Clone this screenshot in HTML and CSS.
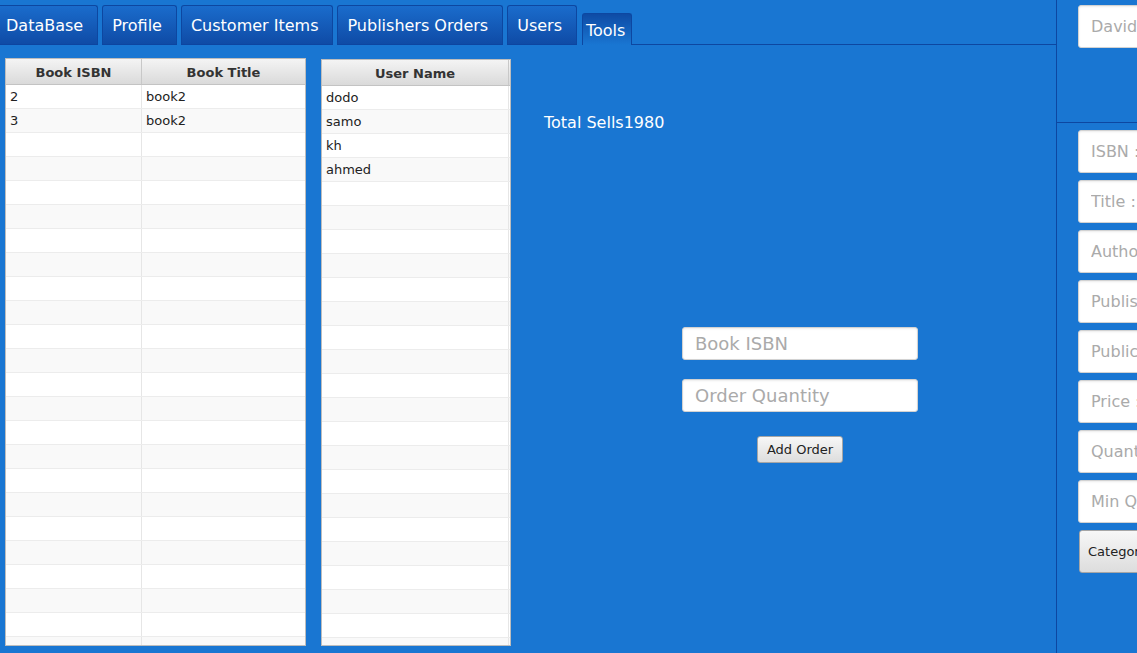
FILE: index.html
```html
<!DOCTYPE html>
<html>
<head>
<meta charset="utf-8">
<link rel="stylesheet" href="styles.css">
</head>
<body>
<div class="app">
  <div class="main">
    <div class="tabbar">
      <div class="tab first">DataBase</div>
      <div class="tab">Profile</div>
      <div class="tab">Customer Items</div>
      <div class="tab">Publishers Orders</div>
      <div class="tab">Users</div>
      <div class="tab selected">Tools</div>
      <div class="tabfill"></div>
    </div>
    <div class="content">
      <div class="grid t1">
        <div class="hdr"><div class="hc c1">Book ISBN</div><div class="hc c2">Book Title</div></div>
        <div class="gbody">
          <div class="row"><div class="cell c1">2</div><div class="cell c2">book2</div></div>
          <div class="row"><div class="cell c1">3</div><div class="cell c2">book2</div></div>
          <div class="row"><div class="cell c1"></div><div class="cell c2"></div></div>
          <div class="row"><div class="cell c1"></div><div class="cell c2"></div></div>
          <div class="row"><div class="cell c1"></div><div class="cell c2"></div></div>
          <div class="row"><div class="cell c1"></div><div class="cell c2"></div></div>
          <div class="row"><div class="cell c1"></div><div class="cell c2"></div></div>
          <div class="row"><div class="cell c1"></div><div class="cell c2"></div></div>
          <div class="row"><div class="cell c1"></div><div class="cell c2"></div></div>
          <div class="row"><div class="cell c1"></div><div class="cell c2"></div></div>
          <div class="row"><div class="cell c1"></div><div class="cell c2"></div></div>
          <div class="row"><div class="cell c1"></div><div class="cell c2"></div></div>
          <div class="row"><div class="cell c1"></div><div class="cell c2"></div></div>
          <div class="row"><div class="cell c1"></div><div class="cell c2"></div></div>
          <div class="row"><div class="cell c1"></div><div class="cell c2"></div></div>
          <div class="row"><div class="cell c1"></div><div class="cell c2"></div></div>
          <div class="row"><div class="cell c1"></div><div class="cell c2"></div></div>
          <div class="row"><div class="cell c1"></div><div class="cell c2"></div></div>
          <div class="row"><div class="cell c1"></div><div class="cell c2"></div></div>
          <div class="row"><div class="cell c1"></div><div class="cell c2"></div></div>
          <div class="row"><div class="cell c1"></div><div class="cell c2"></div></div>
          <div class="row"><div class="cell c1"></div><div class="cell c2"></div></div>
          <div class="row"><div class="cell c1"></div><div class="cell c2"></div></div>
          <div class="row"><div class="cell c1"></div><div class="cell c2"></div></div>
        </div>
      </div>
      <div class="grid t2">
        <div class="hdr"><div class="hc u1">User Name</div><div class="hc fill"></div></div>
        <div class="gbody">
          <div class="row"><div class="cell u1">dodo</div><div class="cell fill"></div></div>
          <div class="row"><div class="cell u1">samo</div><div class="cell fill"></div></div>
          <div class="row"><div class="cell u1">kh</div><div class="cell fill"></div></div>
          <div class="row"><div class="cell u1">ahmed</div><div class="cell fill"></div></div>
          <div class="row"><div class="cell u1"></div><div class="cell fill"></div></div>
          <div class="row"><div class="cell u1"></div><div class="cell fill"></div></div>
          <div class="row"><div class="cell u1"></div><div class="cell fill"></div></div>
          <div class="row"><div class="cell u1"></div><div class="cell fill"></div></div>
          <div class="row"><div class="cell u1"></div><div class="cell fill"></div></div>
          <div class="row"><div class="cell u1"></div><div class="cell fill"></div></div>
          <div class="row"><div class="cell u1"></div><div class="cell fill"></div></div>
          <div class="row"><div class="cell u1"></div><div class="cell fill"></div></div>
          <div class="row"><div class="cell u1"></div><div class="cell fill"></div></div>
          <div class="row"><div class="cell u1"></div><div class="cell fill"></div></div>
          <div class="row"><div class="cell u1"></div><div class="cell fill"></div></div>
          <div class="row"><div class="cell u1"></div><div class="cell fill"></div></div>
          <div class="row"><div class="cell u1"></div><div class="cell fill"></div></div>
          <div class="row"><div class="cell u1"></div><div class="cell fill"></div></div>
          <div class="row"><div class="cell u1"></div><div class="cell fill"></div></div>
          <div class="row"><div class="cell u1"></div><div class="cell fill"></div></div>
          <div class="row"><div class="cell u1"></div><div class="cell fill"></div></div>
          <div class="row"><div class="cell u1"></div><div class="cell fill"></div></div>
          <div class="row"><div class="cell u1"></div><div class="cell fill"></div></div>
          <div class="row"><div class="cell u1"></div><div class="cell fill"></div></div>
        </div>
      </div>
      <div class="middle">
        <div class="total">Total Sells1980</div>
        <div class="orderform">
          <input class="field big" placeholder="Book ISBN">
          <input class="field big" placeholder="Order Quantity">
          <button class="btn add">Add Order</button>
        </div>
      </div>
    </div>
  </div>
  <div class="side">
    <div class="side-top">
      <input class="field side-field" placeholder="David">
    </div>
    <div class="side-form">
      <input class="field side-field" placeholder="ISBN :">
      <input class="field side-field" placeholder="Title :">
      <input class="field side-field" placeholder="Author :">
      <input class="field side-field" placeholder="Publisher :">
      <input class="field side-field" placeholder="Publication Year :">
      <input class="field side-field" placeholder="Price :">
      <input class="field side-field" placeholder="Quantity :">
      <input class="field side-field" placeholder="Min Quantity :">
      <button class="btn category">Category</button>
    </div>
  </div>
</div>
</body>
</html>
```
FILE: styles.css
```css
* { box-sizing: border-box; }
html, body { margin: 0; padding: 0; }
body {
  background: #1976d2;
  font-family: "DejaVu Sans", "Liberation Sans", sans-serif;
  overflow: hidden;
}
.app {
  display: flex;
  width: 1137px;
  height: 653px;
  overflow: hidden;
}
.main {
  width: 1056px;
  flex-shrink: 0;
  display: flex;
  flex-direction: column;
}

/* tabs */
.tabbar {
  height: 45px;
  display: flex;
  align-items: flex-end;
  gap: 4px;
}
.tab {
  height: 40px;
  display: flex;
  align-items: center;
  padding: 0 14px 0 9px;
  font-size: 16px;
  color: #ffffff;
  white-space: nowrap;
  background: linear-gradient(#1a6ccc, #0f4ba6);
  border: 1px solid #0d47a1;
  border-bottom: 1px solid #0d45a0;
  border-radius: 3px 3px 0 0;
}
.tab.first { margin-left: -4px; }
.tab.selected {
  height: 32px;
  margin-left: 1px;
  padding: 1px 6px 0 3px;
  background: linear-gradient(#0e4ba5, #1976d2);
  border: 1px solid #0d47a1;
  border-bottom: none;
}
.tabfill {
  flex: 1;
  height: 1px;
  margin-left: -4px;
  background: #0d47a1;
}

/* content */
.content {
  flex: 1;
  display: flex;
  align-items: flex-start;
}
.grid {
  background: #ffffff;
  border: 1px solid #bdbdbd;
  display: flex;
  flex-direction: column;
  overflow: hidden;
}
.t1 {
  width: 301px;
  height: 588px;
  margin: 13px 0 0 5px;
}
.t2 {
  width: 190px;
  height: 587px;
  margin: 14px 0 0 15px;
}
.hdr {
  height: 26px;
  flex-shrink: 0;
  display: flex;
  background: linear-gradient(#f4f4f4, #dadada);
  border-bottom: 1px solid #c3c3c3;
}
.hc {
  display: flex;
  align-items: center;
  justify-content: center;
  padding-top: 2px;
  font-size: 13px;
  font-weight: bold;
  color: #333333;
  border-right: 1px solid #c8c8c8;
}
.hc.fill { border-right: none; }
.gbody {
  flex: 1;
  overflow: hidden;
}
.row {
  height: 24px;
  display: flex;
  background: #ffffff;
  border-bottom: 1px solid #ececec;
}
.row:nth-child(even) { background: #f9f9f9; }
.cell {
  height: 23px;
  line-height: 23px;
  padding-left: 4px;
  font-size: 13px;
  color: #222222;
  border-right: 1px solid #e6e6e6;
}
.cell.fill { border-right: none; padding: 0; }
.c1 { width: 136px; flex-shrink: 0; }
.c2 { flex: 1; border-right: none; }
.u1 { width: 187px; flex-shrink: 0; }
.fill { flex: 1; }

/* middle */
.middle {
  flex: 1;
  display: flex;
  flex-direction: column;
  padding-left: 33px;
}
.total {
  margin-top: 68px;
  height: 19px;
  line-height: 19px;
  font-size: 16px;
  color: #ffffff;
}
.orderform {
  margin: 195px 0 0 138px;
  width: 236px;
  display: flex;
  flex-direction: column;
  align-items: center;
}
.field {
  font-family: "DejaVu Sans", "Liberation Sans", sans-serif;
  background: #ffffff;
  border: 1px solid #d2d2d2;
  border-radius: 3px;
  box-shadow: inset 0 1px 2px rgba(0,0,0,0.08);
  padding: 0 0 0 12px;
  color: #333333;
  outline: none;
}
.field::placeholder { color: #aaaaaa; }
.field.big {
  width: 236px;
  height: 33px;
  font-size: 18px;
  margin-bottom: 19px;
}
.field.big + .field.big { margin-bottom: 24px; }
.btn {
  font-family: "DejaVu Sans", "Liberation Sans", sans-serif;
  font-size: 13px;
  color: #222222;
  background: linear-gradient(#f7f7f7, #dddddd);
  border: 1px solid #a6a6a6;
  border-radius: 3px;
  padding: 0;
}
.btn.add {
  width: 86px;
  height: 27px;
}

/* right side */
.side {
  width: 300px;
  flex-shrink: 0;
  border-left: 1px solid #0d47a1;
  display: flex;
  flex-direction: column;
}
.side-top {
  height: 123px;
  padding: 5px 0 0 21px;
  border-bottom: 1px solid #0d47a1;
}
.side-field {
  width: 220px;
  height: 43px;
  font-size: 16px;
}
.side-form {
  padding: 7px 0 0 21px;
  display: flex;
  flex-direction: column;
  gap: 7px;
}
.btn.category {
  width: 200px;
  height: 43px;
  margin-left: 1px;
  text-align: left;
  padding-left: 8px;
}
```
